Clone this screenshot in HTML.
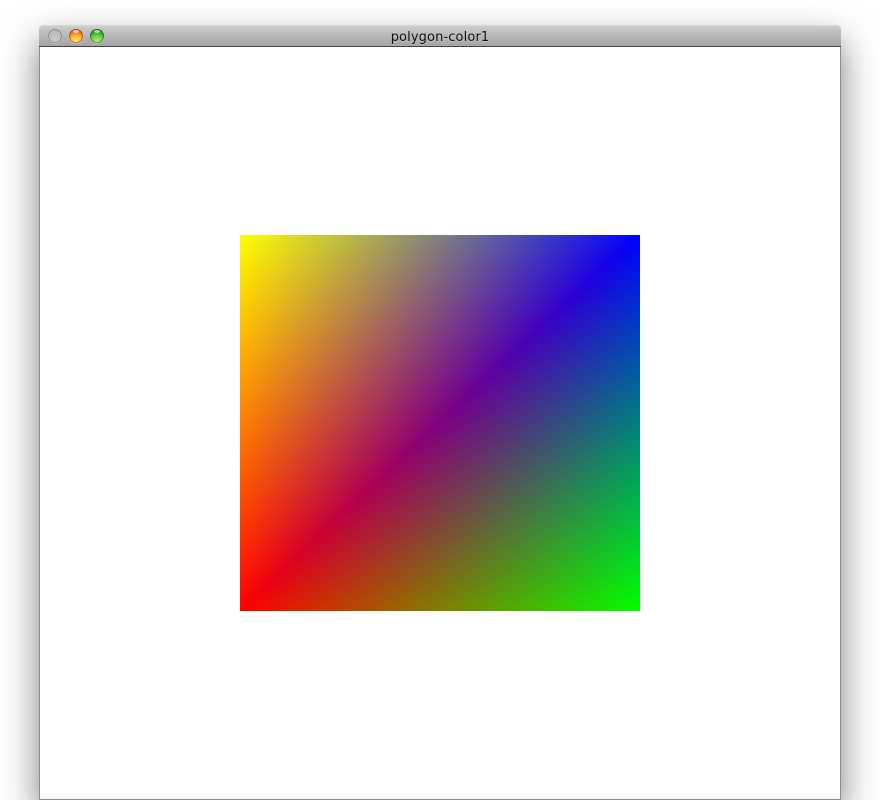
<!DOCTYPE html>
<html>
<head>
<meta charset="utf-8">
<title>polygon-color1</title>
<style>
html,body{margin:0;padding:0;width:880px;height:800px;background:#fff;overflow:hidden}
#win{position:absolute;left:39px;top:25px;width:802px;height:775px;box-sizing:border-box;border-radius:5px 5px 0 0;background:#8e8e8e;box-shadow:0 16px 36px rgba(0,0,0,.52)}
#bar{position:absolute;left:0;top:0;width:802px;height:22px;box-sizing:border-box;border-radius:5px 5px 0 0;background:linear-gradient(#d0d0d0 0,#c8c8c8 2px,#a4a4a4 100%);border-top:1px solid #d8d8d8;border-bottom:1px solid #454545}
#title{position:absolute;left:0;top:2px;width:802px;text-align:center;font:13px/19px "DejaVu Sans","Liberation Sans",sans-serif;color:#111;letter-spacing:.12px;text-shadow:0 1px 0 rgba(255,255,255,.25)}
#content{position:absolute;left:1px;top:22px;width:800px;height:752px;background:#fff}
.b{position:absolute;top:3px;width:14px;height:14px;border-radius:50%}
#b1{left:9px;background:radial-gradient(circle at 50% 75%,#cacaca 0,#bcbcbc 55%,#a2a2a2 100%);box-shadow:inset 0 0 0 1px #949494,0 1px 0 rgba(255,255,255,.25)}
#b2{left:30px;background:radial-gradient(circle at 50% 95%,#ffe870 0,#ffc23a 38%,#f5801f 65%,#c8400f 100%);box-shadow:inset 0 0 0 1px rgba(150,60,15,.55),0 1px 0 rgba(255,255,255,.25)}
#b3{left:51px;background:radial-gradient(circle at 50% 95%,#b8f080 0,#7bd850 38%,#3aa828 65%,#1f7a18 100%);box-shadow:inset 0 0 0 1px rgba(25,95,25,.55),0 1px 0 rgba(255,255,255,.25)}
.b i{position:absolute;left:4px;top:1px;width:6px;height:3px;border-radius:50%;background:rgba(255,255,255,.6)}
#poly{position:absolute;left:240px;top:235px;width:400px;height:376px;isolation:isolate;background:#000;overflow:hidden}
#poly div{position:absolute;left:0;top:0;width:400px;height:376px}
#r{background:linear-gradient(to right,#f00,#000);mix-blend-mode:screen}
#g{background:linear-gradient(to bottom right,#0f0 0%,#000 50%,#0f0 100%);mix-blend-mode:screen}
#bgrp{isolation:isolate;mix-blend-mode:screen;background:#000}
#bh{background:linear-gradient(to right,#000,#00f)}
#bv{background:linear-gradient(to bottom,#00f,#000);mix-blend-mode:darken}
</style>
</head>
<body>
<div id="win">
  <div id="bar">
    <div class="b" id="b1"></div>
    <div class="b" id="b2"><i></i></div>
    <div class="b" id="b3"><i></i></div>
    <div id="title">polygon-color1</div>
  </div>
  <div id="content"></div>
</div>
<div id="poly">
  <div id="r"></div>
  <div id="g"></div>
  <div id="bgrp"><div id="bh"></div><div id="bv"></div></div>
</div>
</body>
</html>
